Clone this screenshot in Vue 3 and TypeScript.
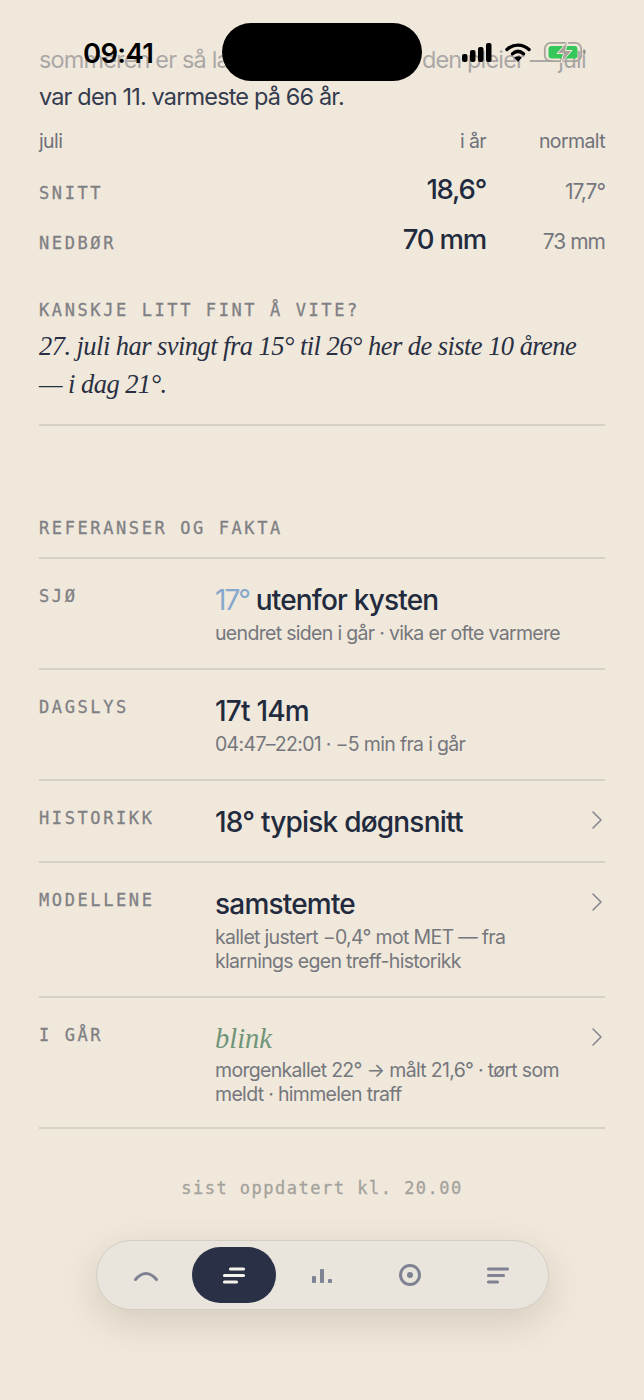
<script setup lang="ts">
interface FactRow {
  label: string
  title?: string
  accent?: string
  serif?: string
  sub?: string[]
  link?: boolean
}

const rows: FactRow[] = [
  { label: 'SJØ', accent: '17°', title: ' utenfor kysten', sub: ['uendret siden i går · vika er ofte varmere'] },
  { label: 'DAGSLYS', title: '17t 14m', sub: ['04:47–22:01 · −5 min fra i går'] },
  { label: 'HISTORIKK', title: '18° typisk døgnsnitt', link: true },
  {
    label: 'MODELLENE',
    title: 'samstemte',
    sub: ['kallet justert −0,4° mot MET — fra', 'klarnings egen treff-historikk'],
    link: true
  },
  {
    label: 'I GÅR',
    serif: 'blink',
    sub: ['morgenkallet 22° → målt 21,6° · tørt som', 'meldt · himmelen traff'],
    link: true
  }
]
</script>

<template>
  <div class="page">
    <main class="content">
      <p class="intro">
        <span>sommeren er så langt bedre enn hva den pleier — juli</span>
        <span>var den 11. varmeste på 66 år.</span>
      </p>

      <div class="compare">
        <span class="compare__head compare__head--left">juli</span>
        <span class="compare__head">i år</span>
        <span class="compare__head">normalt</span>

        <span class="mono compare__label">SNITT</span>
        <span class="compare__now">18,6°</span>
        <span class="compare__norm">17,7°</span>

        <span class="mono compare__label">NEDBØR</span>
        <span class="compare__now">70 mm</span>
        <span class="compare__norm">73 mm</span>
      </div>

      <section class="nice">
        <h3 class="mono nice__label">KANSKJE LITT FINT Å VITE?</h3>
        <p class="nice__text">27. juli har svingt fra 15° til 26° her de siste 10 årene<br />— i dag 21°.</p>
      </section>

      <h2 class="mono refs">REFERANSER OG FAKTA</h2>
      <ul class="facts">
        <li
          v-for="row in rows"
          :key="row.label"
          class="fact"
          :class="{ 'fact--bare': !row.sub, 'fact--serif': row.serif }"
        >
          <span class="mono fact__label">{{ row.label }}</span>
          <div class="fact__body">
            <div v-if="row.serif" class="fact__serif">{{ row.serif }}</div>
            <div v-else class="fact__title"><span v-if="row.accent" class="fact__accent">{{ row.accent }}</span>{{ row.title }}</div>
            <div v-for="line in row.sub" :key="line" class="fact__sub">{{ line }}</div>
          </div>
          <svg v-if="row.link" class="fact__chev" width="12" height="20" viewBox="0 0 12 20" fill="none">
            <path d="M2 2l8 8-8 8" stroke="#85878e" stroke-width="1.600" stroke-linecap="round" stroke-linejoin="round" />
          </svg>
        </li>
      </ul>

      <p class="mono updated">sist oppdatert kl. 20.00</p>
    </main>

    <!-- statuslinje ligger over innholdet -->
    <header class="status">
      <span class="status__time">09:41</span>
      <svg class="status__icons" width="126" height="24" viewBox="0 0 126 24" fill="none">
        <rect x="0" y="14" width="5.500" height="8" rx="2" fill="#000" />
        <rect x="8" y="10" width="5.500" height="12" rx="2" fill="#000" />
        <rect x="16" y="7" width="5.500" height="15" rx="2" fill="#000" />
        <rect x="24" y="3" width="5.500" height="19" rx="2" fill="#000" />
        <path d="M45 9.500c6.500-5.800 15.500-5.800 22 0" stroke="#000" stroke-width="3.400" stroke-linecap="round" />
        <path d="M50.500 13.800c3.400-3 7.600-3 11 0" stroke="#000" stroke-width="3.400" stroke-linecap="round" />
        <path d="M56 22l-3.800-4.600c2.300-1.700 5.300-1.700 7.600 0z" fill="#000" />
        <rect x="82.800" y="2.800" width="36.400" height="18.400" rx="6" stroke="#a8a49b" stroke-width="1.800" />
        <rect x="86.500" y="6" width="29" height="12.500" rx="3" fill="#34c759" />
        <path d="M121.500 9c1.500.4 2 1.500 2 3s-.5 2.600-2 3z" fill="#8d8a83" />
        <path d="M106 1 95 13.500h6.500L99 23 110 10.500h-6.500z" fill="#a8a49b" stroke="#f0e8db" stroke-width="1" stroke-linejoin="round" />
      </svg>
    </header>
    <div class="island"></div>

    <nav class="tabs">
      <button type="button" class="tab">
        <svg width="28" height="28" viewBox="0 0 28 28" fill="none">
          <path d="M3.500 18.500Q14 6.500 24.500 18.500" stroke="#7e8292" stroke-width="3" stroke-linecap="round" />
        </svg>
      </button>
      <button type="button" class="tab tab--active">
        <svg width="28" height="28" viewBox="0 0 28 28" fill="none" stroke="#f6f3ec" stroke-width="3.200" stroke-linecap="round">
          <path d="M10.500 8h13M4.500 14.500h19M4.500 21h12" />
        </svg>
      </button>
      <button type="button" class="tab">
        <svg width="28" height="28" viewBox="0 0 28 28" fill="#7e8292">
          <rect x="4" y="15" width="4" height="7" rx="1" />
          <rect x="12" y="8" width="4" height="14" rx="1" />
          <rect x="20" y="18" width="4" height="4" rx="1" />
        </svg>
      </button>
      <button type="button" class="tab">
        <svg width="28" height="28" viewBox="0 0 28 28" fill="none">
          <circle cx="14" cy="14" r="9.500" stroke="#7e8292" stroke-width="3" />
          <circle cx="14" cy="14" r="3" fill="#7e8292" />
        </svg>
      </button>
      <button type="button" class="tab">
        <svg width="28" height="28" viewBox="0 0 28 28" fill="none" stroke="#7e8292" stroke-width="3.200" stroke-linecap="round">
          <path d="M4.500 8h19M4.500 14.500h15M4.500 21h9" />
        </svg>
      </button>
    </nav>
  </div>
</template>

<style>
html,
body {
  margin: 0;
  background: #f0e8db;
}
</style>

<style scoped>
.page {
  position: relative;
  height: 1400px;
  overflow: hidden;
  background: #f0e8db;
  color: #293043;
  font-family: Inter, 'Noto Sans', sans-serif;
}

.content {
  padding: 41px 39px 0;
}

p,
h2,
h3,
ul {
  margin: 0;
  padding: 0;
}

.mono {
  font-family: 'DejaVu Sans Mono', 'Liberation Mono', monospace;
  font-size: 17px;
  font-weight: 400;
  letter-spacing: 2.600px;
  color: #7f8084;
  -webkit-text-stroke: 0.3px currentColor;
}

.intro {
  font-size: 23.500px;
  line-height: 37px;
  letter-spacing: -0.850px;
  color: #353b4e;
}

.intro span {
  display: block;
  white-space: nowrap;
}

.compare {
  display: grid;
  grid-template-columns: 1fr auto 119px;
  grid-template-rows: 48px 50px 50px;
  align-items: baseline;
  margin-top: 8px;
  text-align: right;
  line-height: 36px;
}

.compare__head {
  font-size: 19.500px;
  letter-spacing: -0.600px;
  color: #6f727a;
}

.compare__head--left,
.compare__label {
  text-align: left;
}

.compare__now {
  font-size: 27.500px;
  font-weight: 500;
  letter-spacing: -1.200px;
  color: #222a3e;
}

.compare__norm {
  font-size: 21px;
  letter-spacing: -1px;
  color: #75777d;
}

.nice {
  margin-top: 26px;
  padding-bottom: 21px;
  border-bottom: 2px solid #d6d1c7;
}

.nice__label {
  line-height: 26px;
}

.nice__text {
  margin-top: 4px;
  font-family: 'Liberation Serif', serif;
  font-style: italic;
  font-size: 26.500px;
  line-height: 38px;
  letter-spacing: -0.550px;
  white-space: nowrap;
  color: #293043;
}

.refs {
  margin-top: 89px;
  line-height: 26px;
}

.facts {
  margin-top: 16px;
  list-style: none;
  border-bottom: 2px solid #d6d1c7;
}

.fact {
  display: grid;
  grid-template-columns: 176px 1fr 12px;
  padding: 21px 0 23px;
  border-top: 2px solid #d6d1c7;
}

.fact--bare {
  padding-bottom: 18px;
}

.fact--serif {
  padding-bottom: 21px;
}

.fact__label {
  line-height: 32px;
}

.fact__title {
  font-size: 28px;
  line-height: 41px;
  font-weight: 500;
  letter-spacing: -0.800px;
  white-space: pre;
  color: #222a3e;
}

.fact__accent {
  color: #86a8cd;
  font-weight: 400;
  letter-spacing: -2px;
}

.fact__serif {
  font-family: 'Liberation Serif', serif;
  font-style: italic;
  font-size: 28.500px;
  line-height: 39px;
  color: #6f9479;
}

.fact__sub {
  font-size: 19.500px;
  line-height: 24px;
  letter-spacing: -0.680px;
  color: #75777d;
  white-space: nowrap;
}

.fact__chev {
  margin-top: 8px;
  margin-right: 2px;
  justify-self: end;
}

.updated {
  margin-top: 46px;
  text-align: center;
  letter-spacing: 1.500px;
  line-height: 26px;
  color: #a4a29c;
}

.status {
  position: absolute;
  top: 0;
  left: 0;
  right: 0;
  height: 80px;
  background: linear-gradient(#f0e8db 40px, rgba(240, 232, 219, 0.65) 50px, rgba(240, 232, 219, 0.6) 72px, rgba(240, 232, 219, 0) 80px);
}

.status__time {
  position: absolute;
  left: 83px;
  top: 37px;
  font-size: 27.500px;
  line-height: 32px;
  font-weight: 600;
  letter-spacing: -0.700px;
  color: #000;
}

.status__icons {
  position: absolute;
  left: 462px;
  top: 40px;
}

.island {
  position: absolute;
  left: 222px;
  top: 23px;
  width: 200px;
  height: 58px;
  border-radius: 29px;
  background: #000;
}

.tabs {
  position: absolute;
  left: 96px;
  top: 1240px;
  box-sizing: border-box;
  width: 453px;
  height: 70px;
  padding-right: 1px;
  display: grid;
  grid-template-columns: repeat(5, 88px);
  justify-content: center;
  align-items: center;
  border: 1.500px solid #d2cec6;
  border-radius: 35px;
  background: #e9e5dd;
  box-shadow: 0 12px 36px rgba(90, 75, 50, 0.18);
}

.tab {
  display: flex;
  align-items: center;
  justify-content: center;
  height: 56px;
  padding: 0;
  border: none;
  background: transparent;
}

.tab--active {
  width: 84px;
  justify-self: center;
  border-radius: 28px;
  background: #2a3146;
}
</style>
